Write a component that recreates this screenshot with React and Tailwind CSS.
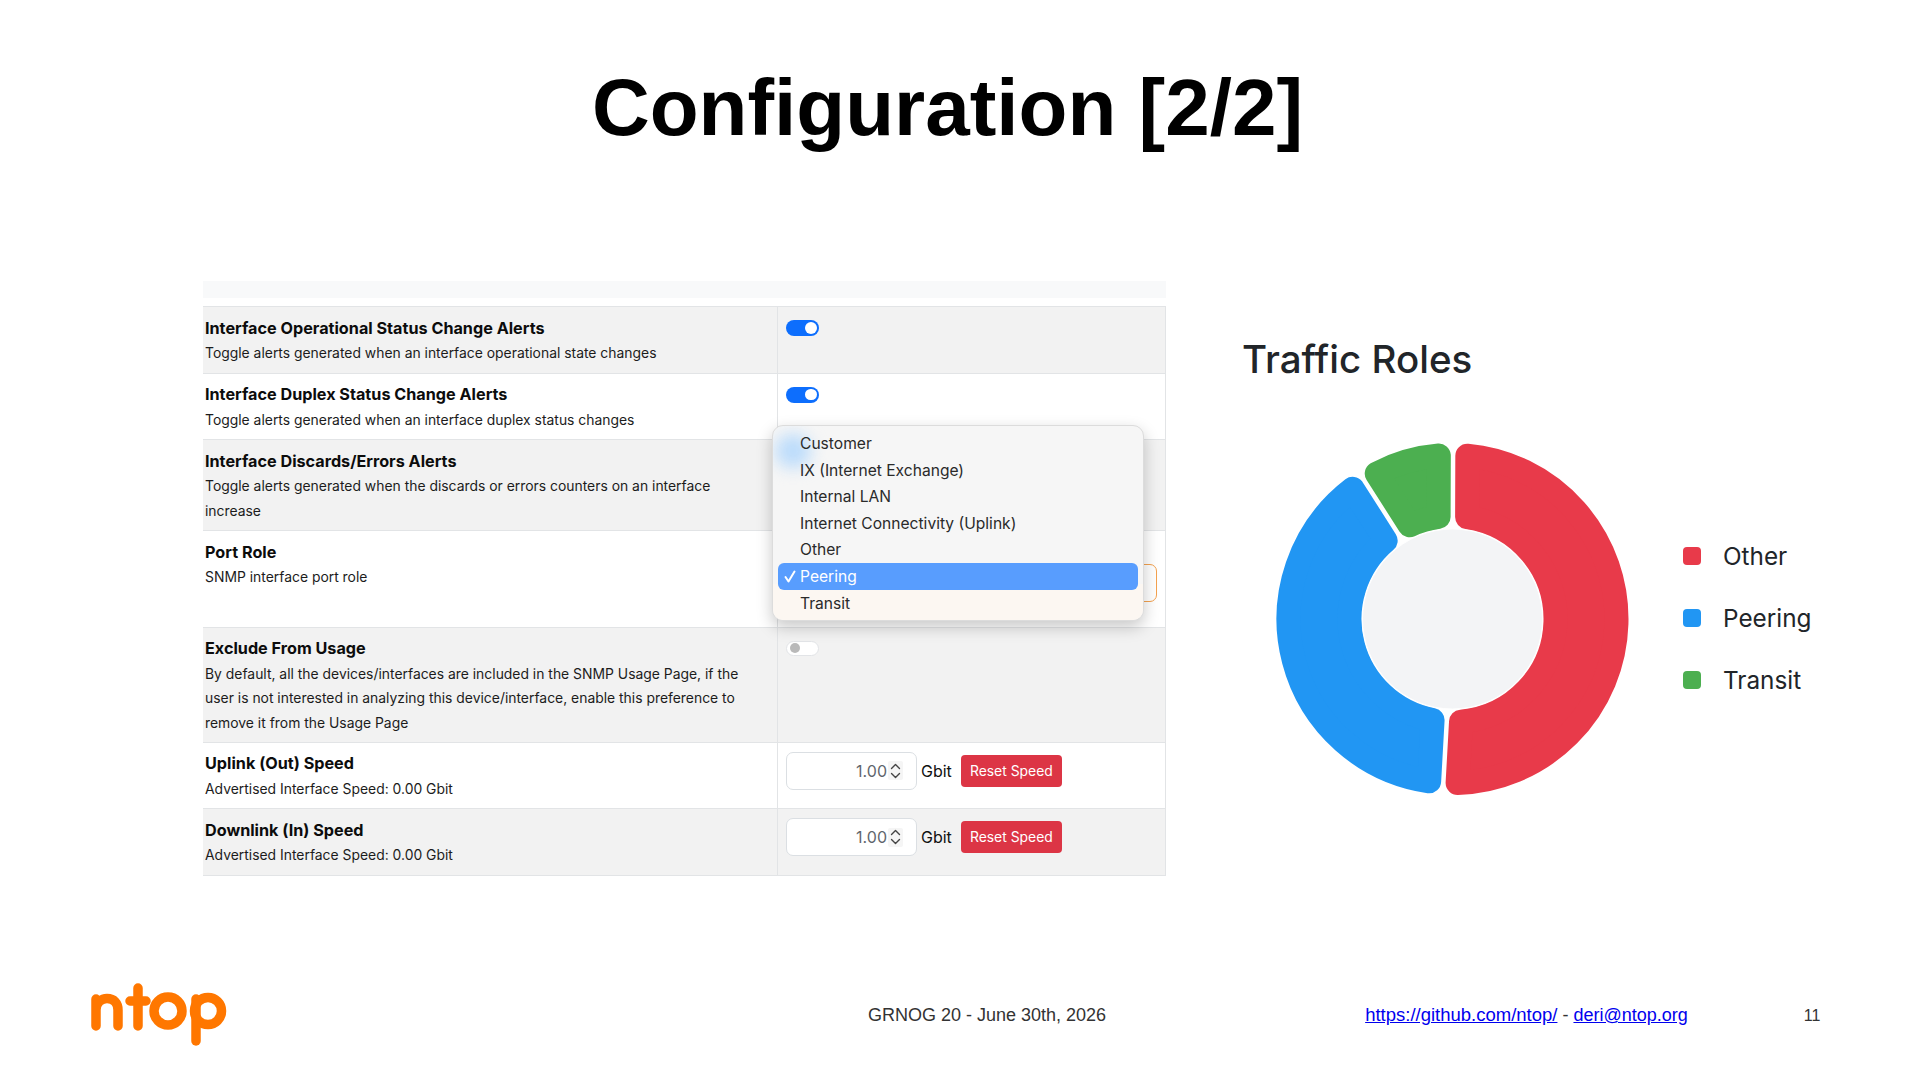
import React from "react";

const UI = "font-['Inter','Liberation_Sans',sans-serif]";

function polar(cx, cy, r, deg) {
  const a = (deg * Math.PI) / 180;
  return [cx + r * Math.sin(a), cy - r * Math.cos(a)];
}

// Ring segment with rounded corners: inset shape plus a round-joined stroke of the same colour.
function segment(cx, cy, ro, ri, start, end, gap, rc) {
  const d = gap / 2 + rc;
  const o = ro - rc;
  const i = ri + rc;
  const so = start + (Math.asin(d / o) * 180) / Math.PI;
  const eo = end - (Math.asin(d / o) * 180) / Math.PI;
  const si = start + (Math.asin(d / i) * 180) / Math.PI;
  const ei = end - (Math.asin(d / i) * 180) / Math.PI;
  const [a, b] = polar(cx, cy, o, so);
  const [c, e] = polar(cx, cy, o, eo);
  const [f, g] = polar(cx, cy, i, ei);
  const [h, j] = polar(cx, cy, i, si);
  const lo = eo - so > 180 ? 1 : 0;
  const li = ei - si > 180 ? 1 : 0;
  return `M${a} ${b}A${o} ${o} 0 ${lo} 1 ${c} ${e}L${f} ${g}A${i} ${i} 0 ${li} 0 ${h} ${j}Z`;
}

function Donut() {
  const cx = 182.5;
  const cy = 182;
  const segs = [
    { c: "#e83a4a", s: 0.2, e: 183.2 },
    { c: "#2196f3", s: 183.2, e: 327.5 },
    { c: "#4caf50", s: 327.5, e: 360.2 },
  ];
  return (
    <svg width="370" height="364" viewBox="0 0 370 364" className="shrink-0">
      {segs.map((s) => (
        <path
          key={s.c}
          d={segment(cx, cy, 176, 91, s.s, s.e, 4.5, 12)}
          fill={s.c}
          stroke={s.c}
          strokeWidth="24"
          strokeLinejoin="round"
        />
      ))}
      <circle cx={cx} cy={cy} r="90" fill="#f3f4f6" stroke="#ffffff" strokeWidth="1" />
    </svg>
  );
}

function Toggle({ on }) {
  if (on)
    return (
      <div className="w-[33px] h-[16px] rounded-full bg-[#0d6efd] flex items-center justify-end pr-[2.500px]">
        <div className="w-[11.500px] h-[11.500px] rounded-full bg-white" />
      </div>
    );
  return (
    <div className="w-[33px] h-[15px] rounded-full bg-white border border-[#e2e4e7] flex items-center pl-[3px]">
      <div className="w-[10px] h-[10px] rounded-full bg-[#b9b9b9]" />
    </div>
  );
}

function Row({ h, shaded, title, children, right }) {
  return (
    <div
      className={`flex border-b border-[#e2e4e6] ${shaded ? "bg-[#f2f2f2]" : "bg-white"} ${h}`}
    >
      <div className="w-[574px] shrink-0 pl-[2px] pt-[8.500px] pr-[30px]">
        <div className="text-[16.2px] leading-[24px] font-bold text-[#0c0c0c]">{title}</div>
        <div className="text-[13.9px] leading-[24.5px] text-[#1c1c1c] mt-[1.500px]">{children}</div>
      </div>
      <div className="flex-1 border-l border-[#e2e4e6] pl-[8px]">{right}</div>
    </div>
  );
}

function Speed() {
  return (
    <div className="flex items-center pt-[9px]">
      <div className="w-[131px] h-[38px] bg-white border border-[#dbdfe3] rounded-[7px] flex items-center justify-end pr-[13px]">
        <span className="text-[16px] text-[#5f666d] mr-[1px]">1.00</span>
        <div className="w-[15px] h-[19px] bg-[#f5f5f5] rounded-[2px] flex items-center justify-center">
          <svg width="13" height="18" viewBox="0 0 13 18" fill="none" stroke="#444" strokeWidth="1.4" strokeLinecap="round" strokeLinejoin="round">
            <path d="M2.5 6.5 6.5 2.5l4 4" />
            <path d="M2.5 11.5l4 4 4-4" />
          </svg>
        </div>
      </div>
      <span className="ml-[4px] text-[16px] text-[#111]">Gbit</span>
      <button className="ml-[9px] w-[101px] h-[32px] pt-[1px] bg-[#dc3545] rounded-[4px] text-white text-[13.9px]">
        Reset Speed
      </button>
    </div>
  );
}

function Dropdown() {
  const items = ["Customer", "IX (Internet Exchange)", "Internal LAN", "Internet Connectivity (Uplink)", "Other", "Peering", "Transit"];
  return (
    <div className="absolute left-[569px] top-[144px] w-[372px] h-[196px] rounded-[11px] bg-[#f6f6f6] border border-[#dcdcdc] shadow-[0_6px_16px_rgba(0,0,0,0.22)] overflow-hidden pt-[4.500px] px-[5px]">
      <div className="absolute left-[2px] top-[8px] w-[36px] h-[34px] rounded-full bg-[#bcdcfb] blur-[8px]" />
      <div className="absolute left-0 right-0 bottom-0 h-[36px] bg-[#fcf7f2]" />
      <div className="relative">
        {items.map((t) => {
          const sel = t === "Peering";
          return (
            <div
              key={t}
              className={`h-[26.6px] flex items-center pl-[22px] rounded-[6px] text-[15.6px] ${sel ? "bg-[#589dfe] text-white" : "text-[#2a2a2a]"} relative`}
            >
              {sel && (
                <svg className="absolute left-[6px] top-[7px]" width="12" height="13" viewBox="0 0 12 13" fill="none" stroke="#fff" strokeWidth="2" strokeLinecap="round" strokeLinejoin="round">
                  <path d="M1.5 7 4.5 11.5 10.5 1.5" />
                </svg>
              )}
              {t}
            </div>
          );
        })}
      </div>
    </div>
  );
}

function Logo() {
  return (
    <svg width="190" height="100" viewBox="0 0 190 100" fill="none" stroke="#ff7700" strokeWidth="9.5" strokeLinecap="round" strokeLinejoin="round" className="shrink-0">
      <path d="M26 39V66M26 50C26 42 32 38.500 37 38.500C44 38.500 48 43 48 50V66" />
      <path d="M68 28V66M60 41H76" />
      <circle cx="98" cy="51" r="14" />
      <path d="M126 39V81" />
      <circle cx="138" cy="51" r="13.500" />
    </svg>
  );
}

function Legend({ color, label }) {
  return (
    <div className="flex items-center h-[18px]">
      <div className={`w-[18px] h-[18px] rounded-[4px] ${color}`} />
      <span className="ml-[22px] text-[24.3px] text-[#212529]">{label}</span>
    </div>
  );
}

export default function App() {
  return (
    <div className={`w-[1920px] h-[1080px] bg-white flex flex-col overflow-hidden ${UI}`}>
      <header className="h-[281px] shrink-0 pt-[60px] pr-[25px] flex justify-center">
        <h1 className="font-['Liberation_Sans',sans-serif] font-bold text-[80px] leading-[96px] text-black">
          Configuration [2/2]
        </h1>
      </header>

      <main className="flex-1 flex pl-[203px]">
        <section className="w-[963px] shrink-0 relative">
          <div className="h-[17px] bg-[#f8f9fa]" />
          <div className="mt-[8px] border-t border-r border-[#e2e4e6]">
            <Row h="h-[66.500px]" shaded title="Interface Operational Status Change Alerts"
              right={<div className="pt-[13px]"><Toggle on /></div>}>
              Toggle alerts generated when an interface operational state changes
            </Row>
            <Row h="h-[66.500px]" title="Interface Duplex Status Change Alerts"
              right={<div className="pt-[13px]"><Toggle on /></div>}>
              Toggle alerts generated when an interface duplex status changes
            </Row>
            <Row h="h-[91px]" shaded title="Interface Discards/Errors Alerts">
              Toggle alerts generated when the discards or errors counters on an interface increase
            </Row>
            <Row h="h-[96.500px]" title="Port Role"
              right={
                <div className="pt-[33px]">
                  <div className="w-[371px] h-[38px] rounded-[7px] border-[1.500px] border-[#f4a24f]" />
                </div>
              }>
              SNMP interface port role
            </Row>
            <Row h="h-[115px]" shaded title="Exclude From Usage"
              right={<div className="pt-[13px]"><Toggle /></div>}>
              By default, all the devices/interfaces are included in the SNMP Usage Page, if the user is not interested in analyzing this device/interface, enable this preference to remove it from the Usage Page
            </Row>
            <Row h="h-[66.500px]" title="Uplink (Out) Speed" right={<Speed />}>
              Advertised Interface Speed: 0.00 Gbit
            </Row>
            <Row h="h-[67px]" shaded title="Downlink (In) Speed" right={<Speed />}>
              Advertised Interface Speed: 0.00 Gbit
            </Row>
          </div>
          <Dropdown />
        </section>

        <section className="ml-[76px] pt-[53px]">
          <h2 className="text-[38.5px] leading-[50px] font-medium text-[#212529]">Traffic Roles</h2>
          <div className="flex items-center mt-[53px] ml-[28px]">
            <Donut />
            <div className="ml-[43px] mb-[2px] flex flex-col gap-[44px]">
              <Legend color="bg-[#e83a4a]" label="Other" />
              <Legend color="bg-[#2196f3]" label="Peering" />
              <Legend color="bg-[#4caf50]" label="Transit" />
            </div>
          </div>
        </section>
      </main>

      <footer className="h-[120px] shrink-0 flex items-start pl-[70px] font-['Liberation_Sans',sans-serif] text-[18px] leading-[22px] text-[#333]">
        <Logo />
        <span className="ml-[608px] mt-[44px]">GRNOG 20 - June 30th, 2026</span>
        <span className="ml-[259px] mt-[44px]">
          <a className="text-[#0000ee] underline text-[18.5px]">https://github.com/ntop/</a>
          {" - "}
          <a className="text-[#0000ee] underline">deri@ntop.org</a>
        </span>
        <span className="ml-[116px] mt-[45px] text-[16px]">11</span>
      </footer>
    </div>
  );
}
